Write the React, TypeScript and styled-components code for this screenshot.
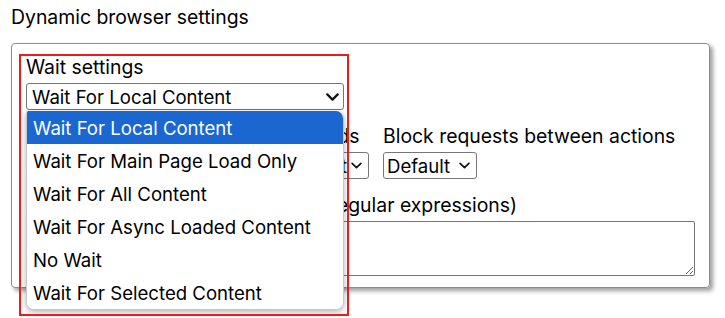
import React from 'react';
import styled, { createGlobalStyle } from 'styled-components';

const GlobalStyle = createGlobalStyle`
  html, body {
    margin: 0;
    min-height: 318px;
    background: #ffffff;
    font-family: Inter, "Noto Sans", sans-serif;
    color: #000000;
  }
`;

const Page = styled.div`
  box-sizing: border-box;
  min-height: 318px;
  padding: 6px 0 0 11px;
  width: 710px;
`;

const Title = styled.div`
  font-size: 19.4px;
  line-height: 23px;
  margin-bottom: 14px;
`;

const Panel = styled.div`
  position: relative;
  border: 1px solid #8c8c8c;
  border-radius: 4px;
  box-shadow: 3px 3px 4px rgba(0, 0, 0, 0.38);
  padding: 12px 14px 11px 14px;
  display: flex;
  flex-direction: column;
  gap: 15px;
`;

const Row = styled.div`
  display: flex;
  gap: 14px;
`;

const Field = styled.div<{ $grow?: boolean }>`
  position: relative;
  display: flex;
  flex-direction: column;
  align-items: ${(p) => (p.$grow ? 'stretch' : 'flex-start')};
  gap: 4px;
  flex: ${(p) => (p.$grow ? '1' : 'none')};
`;

const Label = styled.div`
  font-size: 19.4px;
  line-height: 23px;
  white-space: nowrap;
`;

const SelectBox = styled.div<{ $width?: number; $open?: boolean; $end?: boolean }>`
  box-sizing: border-box;
  display: flex;
  align-items: center;
  justify-content: ${(p) => (p.$end ? 'flex-end' : 'space-between')};
  gap: ${(p) => (p.$end ? 4 : 9)}px;
  height: 27px;
  width: ${(p) => (p.$width ? `${p.$width}px` : 'auto')};
  padding: 0 ${(p) => (p.$open ? 4 : 6)}px 0 ${(p) => (p.$open ? 5 : 3)}px;
  border: 1px solid #767676;
  border-radius: 3px;
  background: #ffffff;
  font-size: 18.6px;
  white-space: nowrap;

  svg {
    flex-shrink: 0;
  }
`;

const Chevron = ({ big }: { big?: boolean }) => (
  <svg width={big ? 13 : 11} height={big ? 8 : 7} viewBox="0 0 10 6" fill="none">
    <path
      d="M1 1l4 4 4-4"
      stroke="#111"
      strokeWidth={big ? 1.7 : 1.5}
      strokeLinecap="round"
      strokeLinejoin="round"
    />
  </svg>
);

const TextArea = styled.textarea`
  box-sizing: border-box;
  display: block;
  height: 55px;
  width: 100%;
  margin: 0;
  border: 1px solid #767676;
  border-radius: 2px;
  font-family: inherit;
  font-size: 16px;
`;

const Dropdown = styled.div`
  position: absolute;
  left: 0;
  top: calc(100% + 1px);
  width: 316px;
  background: #ffffff;
  border: 1px solid #c8c8c8;
  border-top: none;
  border-radius: 2px 8px 8px 8px;
  box-shadow: 0 2px 6px rgba(0, 0, 0, 0.3);
  overflow: hidden;
  z-index: 2;
`;

const Option = styled.div<{ $active?: boolean }>`
  height: 33px;
  display: flex;
  align-items: center;
  padding-left: 6px;
  font-size: 18.6px;
  white-space: nowrap;
  background: ${(p) => (p.$active ? '#1a67d2' : '#ffffff')};
  color: ${(p) => (p.$active ? '#ffffff' : '#000000')};
`;

const Highlight = styled.div`
  position: absolute;
  left: 7px;
  top: 10px;
  width: 326px;
  height: 258px;
  border: 2px solid #e51e1e;
  pointer-events: none;
  z-index: 3;
`;

const waitOptions = [
  'Wait For Local Content',
  'Wait For Main Page Load Only',
  'Wait For All Content',
  'Wait For Async Loaded Content',
  'No Wait',
  'Wait For Selected Content',
];

export default function App() {
  return (
    <>
      <GlobalStyle />
      <Page>
        <Title>Dynamic browser settings</Title>
        <Panel>
          <Field>
            <Label>Wait settings</Label>
            <SelectBox $width={318} $open>
              <span>Wait For Local Content</span>
              <Chevron big />
            </SelectBox>
            <Dropdown>
              {waitOptions.map((o, i) => (
                <Option key={o} $active={i === 0}>
                  {o}
                </Option>
              ))}
            </Dropdown>
          </Field>
          <Row>
            <Field>
              <Label>Maximal wait after action in seconds</Label>
              <SelectBox $width={343} $end>
                <span>Use the timeouts of account default</span>
                <Chevron />
              </SelectBox>
            </Field>
            <Field>
              <Label>Block requests between actions</Label>
              <SelectBox>
                <span>Default</span>
                <Chevron />
              </SelectBox>
            </Field>
          </Row>
          <Field $grow>
            <Label>Blocked requests to these URLs (regular expressions)</Label>
            <TextArea />
          </Field>
          <Highlight />
        </Panel>
      </Page>
    </>
  );
}
